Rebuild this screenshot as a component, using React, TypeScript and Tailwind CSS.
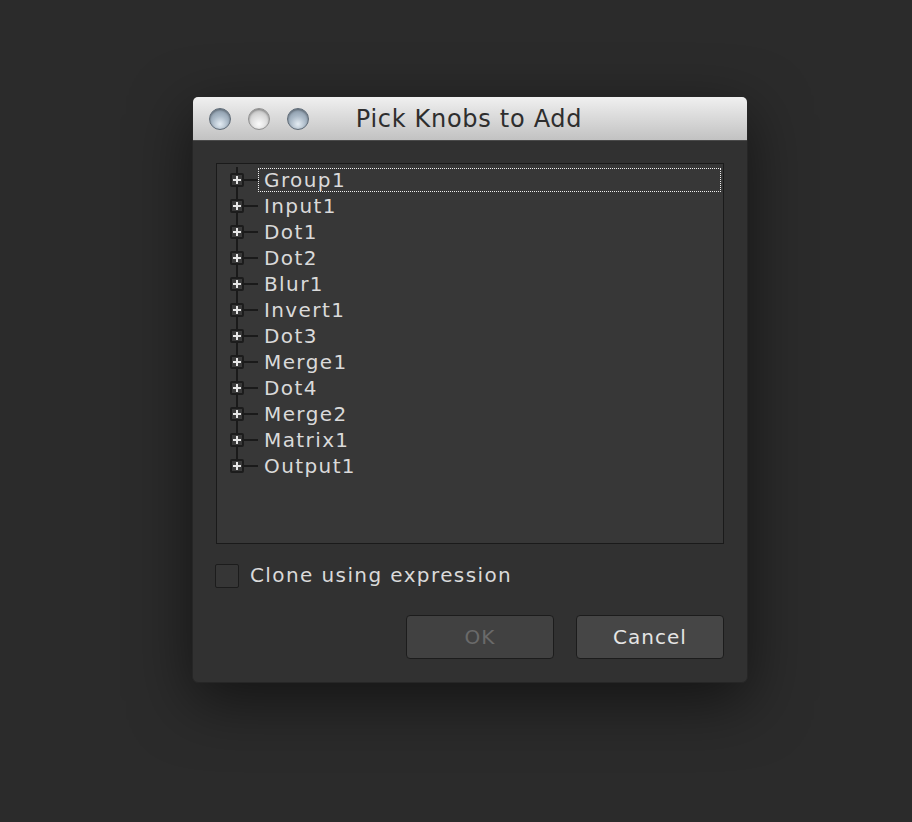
import React from "react";

const nodes = [
  "Group1",
  "Input1",
  "Dot1",
  "Dot2",
  "Blur1",
  "Invert1",
  "Dot3",
  "Merge1",
  "Dot4",
  "Merge2",
  "Matrix1",
  "Output1",
];

const font = { fontFamily: '"DejaVu Sans", Verdana, sans-serif' };

const Light = ({ tone }: { tone: "blue" | "gray" }) => (
  <div
    className={`w-[22px] h-[22px] rounded-full border ${
      tone === "blue"
        ? "border-[#5f6b77] bg-[radial-gradient(circle_at_50%_75%,#e4ecf3_0%,#a9b8c6_45%,#7b8b9b_100%)]"
        : "border-[#8f8f8f] bg-[radial-gradient(circle_at_50%_75%,#fbfbfb_0%,#dadada_50%,#b3b3b3_100%)]"
    } shadow-[inset_0_1px_2px_rgba(0,0,0,0.35)]`}
  />
);

const TreeRow = ({ label, last, selected }: { label: string; last: boolean; selected: boolean }) => (
  <div className="flex items-center h-[26px]">
    <div className="relative w-[41px] h-full shrink-0">
      {/* tree guide */}
      <div className={`absolute left-[19px] top-0 w-[2px] bg-[#1a1a1a] ${last ? "h-1/2" : "h-full"}`} />
      <div className="absolute left-[26px] top-[12px] w-[15px] h-[2px] bg-[#1a1a1a]" />
      <div className="absolute left-[13px] top-[6px] w-[14px] h-[14px] border-2 border-[#1c1c1c] rounded-[2px] bg-[#3a3a3a] flex items-center justify-center">
        <span className="block relative w-[8px] h-[8px]">
          <span className="absolute left-0 top-[3px] w-[8px] h-[2px] bg-[#e6e6e6]" />
          <span className="absolute left-[3px] top-0 w-[2px] h-[8px] bg-[#e6e6e6]" />
        </span>
      </div>
    </div>
    <div
      className={`flex-1 mr-[1px] h-[24px] flex items-center pl-[5px] text-[20px] tracking-[1.4px] text-[#dadada] ${
        selected ? "border border-dotted border-[#f0f0f0]" : "border border-transparent"
      }`}
    >
      {label}
    </div>
  </div>
);

export default function App() {
  return (
    <div className="w-full h-[822px] bg-[#2b2b2b] pt-[96px] pl-[192px]" style={font}>
      <div className="w-[556px] h-[587px] rounded-[6px] bg-[#313131] flex flex-col overflow-hidden shadow-[0_18px_60px_rgba(0,0,0,0.55)] border border-[#262626]">
        {/* title bar */}
        <div className="h-[44px] shrink-0 grid grid-cols-[1fr_auto_1fr] items-center bg-gradient-to-b from-[#f0f0f0] to-[#c2c2c2] border-b border-[#4a4a4a]">
          <div className="flex items-center gap-[17px] pl-[16px]">
            <Light tone="blue" />
            <Light tone="gray" />
            <Light tone="blue" />
          </div>
          <div className="text-[24px] tracking-[0.7px] text-[#2e2e2e] pt-[1px] pr-[2px]">Pick Knobs to Add</div>
          <div />
        </div>

        {/* body */}
        <div className="flex-1 flex flex-col px-[23px] pt-[22px] pb-[23px]">
          <div className="h-[381px] border border-[#1a1a1a] bg-[#373737] pt-[3px] pr-[1px]">
            {nodes.map((n, i) => (
              <TreeRow key={n} label={n} last={i === nodes.length - 1} selected={i === 0} />
            ))}
          </div>

          <div className="flex items-center mt-[18px] gap-[11px] -ml-[1px]">
            <div className="w-[24px] h-[24px] border border-[#1c1c1c] rounded-[2px] bg-[#363636]" />
            <span className="text-[20px] tracking-[1.4px] text-[#dadada] -mt-[2px]">Clone using expression</span>
          </div>

          <div className="flex justify-end gap-[22px] mt-auto">
            <button className="w-[148px] h-[44px] rounded-[4px] border border-[#1c1c1c] bg-[#414141] text-[20px] tracking-[1px] text-[#6a6a6a]">
              OK
            </button>
            <button className="w-[148px] h-[44px] rounded-[4px] border border-[#1c1c1c] bg-[#464646] text-[20px] tracking-[1px] text-[#e4e4e4]">
              Cancel
            </button>
          </div>
        </div>
      </div>
    </div>
  );
}
